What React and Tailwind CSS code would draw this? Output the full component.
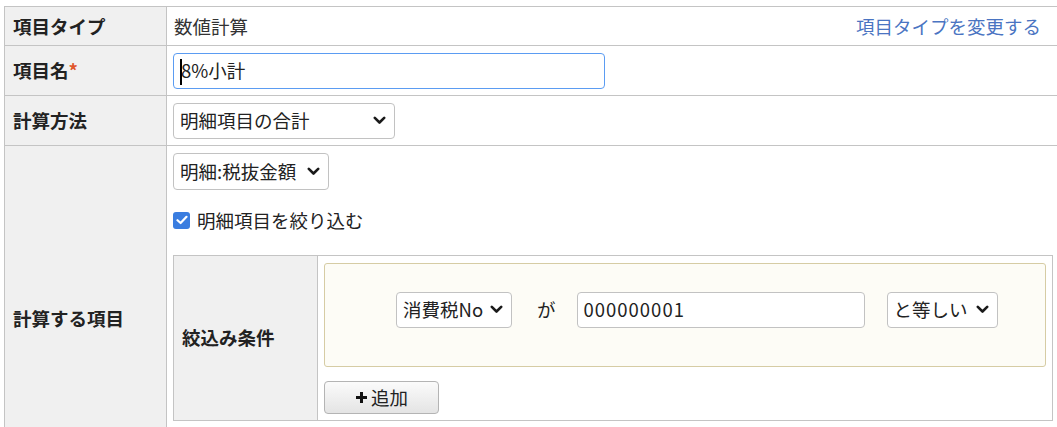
import React from "react";

const Chevron = ({ className = "" }) => (
  <svg width="13" height="9" viewBox="0 0 13 9" className={className}>
    <path d="M1.8 1.8 L6.5 6.5 L11.2 1.8" fill="none" stroke="#1a1a1a" strokeWidth="2.6" strokeLinecap="round" strokeLinejoin="round" />
  </svg>
);

const Select = ({ text, className = "" }) => (
  <div className={`flex items-center justify-between rounded-[4px] border border-[#c2c2c2] bg-white pl-[6px] pr-[8px] text-[#222] ${className}`}>
    <span className="whitespace-nowrap">{text}</span>
    <Chevron className="ml-[4px] shrink-0" />
  </div>
);

export default function App() {
  const font = { fontFamily: '"Noto Sans CJK JP", "Noto Sans", sans-serif' };
  return (
    <div className="w-[1057px] h-[427px] overflow-hidden bg-white pt-[6px] pl-[4px] text-[18.5px] leading-none text-[#333]" style={font}>
      <table className="w-[1058px] border-collapse">
        <tbody>
          <tr className="h-[39px]">
            <th className="w-[162px] border border-[#c4c4c4] bg-[#f0f0f0] pl-[8px] text-left align-middle font-bold text-[#222]">項目タイプ</th>
            <td className="border border-[#c4c4c4] pl-[7px] align-middle">
              <div className="flex items-center justify-between pr-[20px]">
                <span>数値計算</span>
                <span className="text-[#4a74c2]">項目タイプを変更する</span>
              </div>
            </td>
          </tr>
          <tr className="h-[50px]">
            <th className="border border-[#c4c4c4] bg-[#f0f0f0] pl-[8px] text-left align-middle font-bold text-[#222]">
              項目名<span className="text-[#e0562b]">*</span>
            </th>
            <td className="border border-[#c4c4c4] pl-[6px] align-middle">
              <div className="relative flex h-[36px] w-[432px] items-center rounded-[4px] border-[1.5px] border-[#5b9cf2] bg-white pl-[7px] text-[#222]">
                <span className="absolute left-[6px] top-[5px] h-[26px] w-[2px] bg-black"></span>
                <span>8%小計</span>
              </div>
            </td>
          </tr>
          <tr className="h-[50px]">
            <th className="border border-[#c4c4c4] bg-[#f0f0f0] pl-[8px] text-left align-middle font-bold text-[#222]">計算方法</th>
            <td className="border border-[#c4c4c4] pl-[6px] align-middle">
              <Select text="明細項目の合計" className="h-[36px] w-[222px]" />
            </td>
          </tr>
          <tr>
            <th className="border border-[#c4c4c4] bg-[#f0f0f0] pl-[8px] text-left align-middle font-bold text-[#222]">計算する項目</th>
            <td className="border border-[#c4c4c4] pl-[6px] pr-[7px] pt-[7px] pb-[70px] align-top">
              <Select text="明細:税抜金額" className="h-[37px] w-[156px]" />
              <div className="mt-[21px] flex items-center">
                <span className="flex h-[17px] w-[17px] items-center justify-center rounded-[3px] bg-[#3a7de0]">
                  <svg width="12" height="10" viewBox="0 0 12 10">
                    <path d="M1.5 5.2 L4.6 8 L10.5 1.8" fill="none" stroke="white" strokeWidth="2.2" strokeLinecap="round" strokeLinejoin="round" />
                  </svg>
                </span>
                <span className="ml-[7px] text-[#222]">明細項目を絞り込む</span>
              </div>
              <table className="mt-[25px] w-[880px] border-collapse">
                <tbody>
                  <tr>
                    <th className="w-[144px] border border-[#c4c4c4] bg-[#f0f0f0] pl-[8px] text-left align-middle font-bold text-[#222]">絞込み条件</th>
                    <td className="border border-[#c4c4c4] px-[6px] pt-[7px] pb-[6px] align-top">
                      <div className="flex h-[104px] items-center rounded-[3px] border border-[#d6cca4] bg-[#fdfcf6] pl-[71px] pb-[10px]">
                        <Select text="消費税No" className="h-[36px] w-[116px]" />
                        <span className="ml-[25px] text-[#222]">が</span>
                        <div className="ml-[21px] flex h-[36px] w-[288px] items-center rounded-[4px] border border-[#c2c2c2] bg-white pl-[6px] tracking-[1px] text-[#222]">000000001</div>
                        <Select text="と等しい" className="ml-[22px] h-[36px] w-[111px]" />
                      </div>
                      <div className="mt-[14px] flex h-[33px] w-[115px] items-center justify-center rounded-[4px] border border-[#b4b4b4] bg-gradient-to-b from-[#fbfbfb] to-[#e4e4e4] text-[#222]">
                        <svg width="13" height="13" viewBox="0 0 13 13" className="mr-[3px]">
                          <path d="M6.5 1 V12 M1 6.5 H12" stroke="#111" strokeWidth="3" />
                        </svg>
                        <span>追加</span>
                      </div>
                    </td>
                  </tr>
                </tbody>
              </table>
            </td>
          </tr>
        </tbody>
      </table>
    </div>
  );
}
